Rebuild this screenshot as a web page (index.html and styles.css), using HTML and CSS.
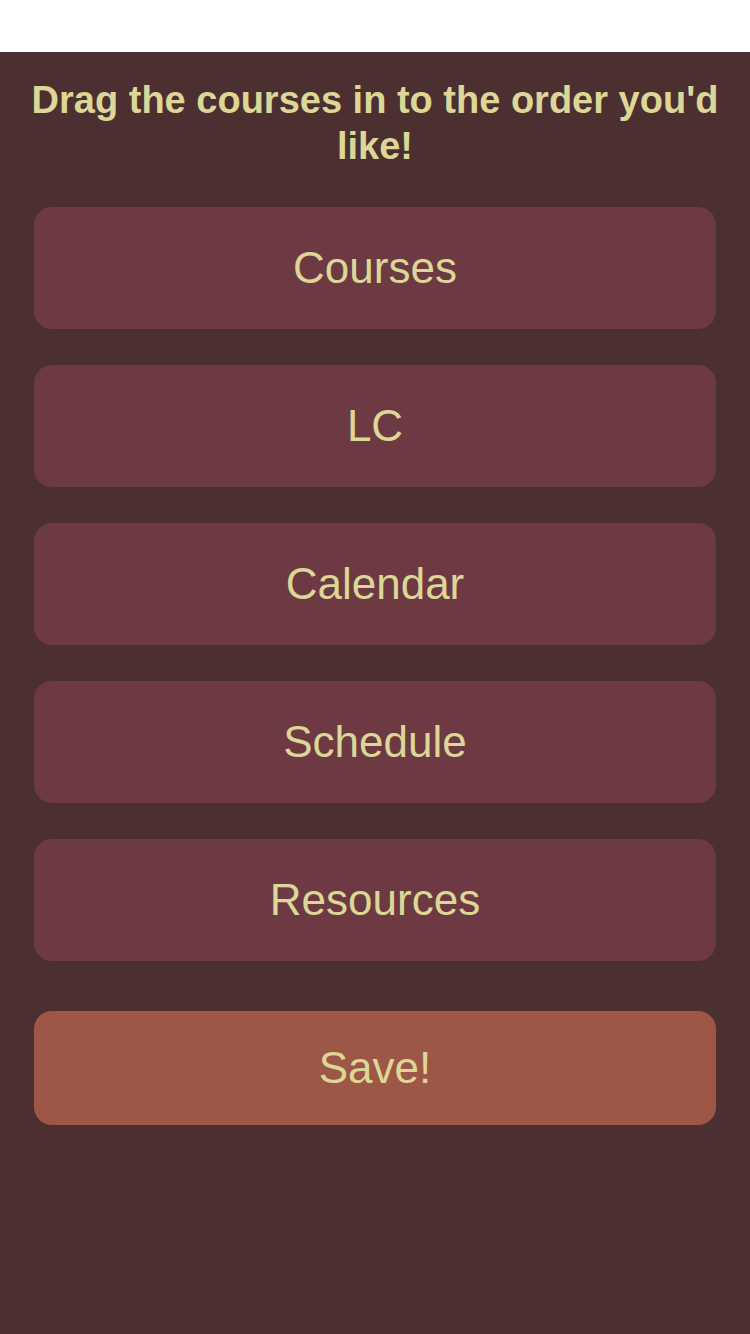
FILE: index.html
```html
<!DOCTYPE html>
<html>
<head>
<meta charset="utf-8">
<link rel="stylesheet" href="styles.css">
</head>
<body>
<div class="topbar"></div>
<main class="screen">
  <h1 class="title">Drag the courses in to the order you'd like!</h1>
  <ul class="list">
    <li class="item">Courses</li>
    <li class="item">LC</li>
    <li class="item">Calendar</li>
    <li class="item">Schedule</li>
    <li class="item">Resources</li>
  </ul>
  <button class="save">Save!</button>
</main>
</body>
</html>
```
FILE: styles.css
```css
html, body {
  margin: 0;
  padding: 0;
  height: 100%;
}
body {
  background: #4b2f31;
  font-family: "Liberation Sans", Arial, sans-serif;
  display: flex;
  flex-direction: column;
}
.topbar {
  height: 52px;
  background: #ffffff;
  flex: none;
}
.screen {
  flex: 1;
  background: #4b2f31;
  padding: 25px 34px 0;
  display: flex;
  flex-direction: column;
}
.title {
  margin: 0 -20px;
  font-size: 38px;
  line-height: 46px;
  font-weight: bold;
  color: #dcd697;
  text-align: center;
}
.list {
  list-style: none;
  margin: 38px 0 0;
  padding: 0;
  display: flex;
  flex-direction: column;
  gap: 36px;
}
.item {
  height: 122px;
  border-radius: 18px;
  background: #6d3a43;
  color: #dcd697;
  font-size: 44px;
  display: flex;
  align-items: center;
  justify-content: center;
}
.save {
  margin-top: 50px;
  height: 114px;
  border: none;
  border-radius: 18px;
  background: #9e5647;
  color: #dcd697;
  font-family: "Liberation Sans", Arial, sans-serif;
  font-size: 44px;
  padding: 0;
}
```
